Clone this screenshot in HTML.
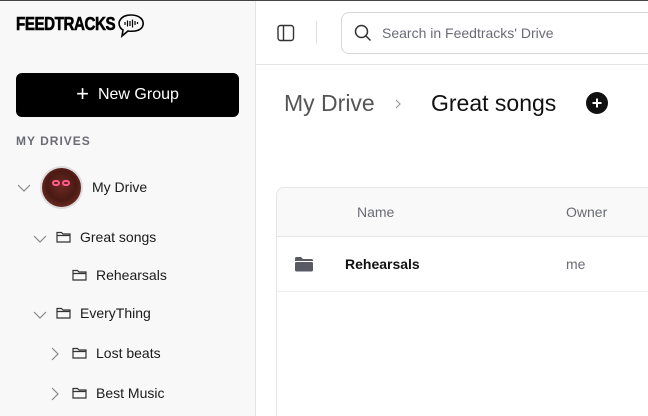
<!DOCTYPE html>
<html style="overflow:hidden"><head><meta charset="utf-8"><style>
*{margin:0;padding:0;box-sizing:border-box}
html,body{width:648px;height:416px;overflow:hidden}
body{background:#fff;font-family:"Liberation Sans",sans-serif;position:relative;color:#111}
.a{position:absolute}
#top{left:0;top:0;width:648px;height:1px;background:#444}
#side{left:0;top:1px;width:256px;height:415px;background:#f8f8f8;border-right:1px solid #e3e3e3}
.logo{left:16px;top:14px;font-weight:bold;font-size:18px;letter-spacing:-0.5px;transform:scaleX(0.84);transform-origin:left top;color:#000;-webkit-text-stroke:0.6px #000}
.btn{left:16px;top:73px;width:223px;height:44px;background:#000;border-radius:6px;color:#fff;font-size:16px;display:flex;align-items:center;justify-content:center}
.lab{left:16px;top:134px;font-size:12px;color:#6b6b76;letter-spacing:1px;font-weight:bold}
.t{font-size:14px;color:#1a1a1a}
.chev{stroke:#888;fill:none;stroke-width:1.2}
.fold{stroke:#333;fill:none;stroke-width:1.2}
</style></head><body>
<div id="top" class="a"></div>
<div id="side" class="a"></div>
<div class="a logo">FEEDTRACKS</div>
<svg class="a" style="left:116px;top:13px" width="29" height="25" viewBox="0 0 29 25"><path d="M4 14 C1 8 6 2 15 2 C24 2 28 7 27 12 C26 17 20 19 12 18 L6 23 L7 17 C5 16 4.5 15 4 14Z" fill="none" stroke="#000" stroke-width="1.6"/><g stroke="#000" stroke-width="1.2"><path d="M9 9v3M11.5 7.5v6M14 8v5M16.5 6.5v8M19 8v4M21.5 9v2"/></g></svg>
<div class="a btn"><span style="font-size:22px;font-weight:300;margin-right:9px;margin-top:-3px">+</span>New Group</div>
<div class="a lab">MY DRIVES</div>
<svg class="a" style="left:17px;top:183px" width="14" height="10"><path class="chev" d="M1 2l6 6 6-6"/></svg>
<div class="a" style="left:40px;top:166px;width:43px;height:43px;border-radius:50%;background:#ddd;padding:2px"><div style="width:39px;height:39px;border-radius:50%;background:radial-gradient(circle at 50% 45%,#6b2a22 0,#4a1a14 50%,#8a3a2a 100%);position:relative"><div style="position:absolute;left:10px;top:12px;width:8px;height:6px;border:2px solid #ff5a8a;border-radius:3px"></div><div style="position:absolute;left:20px;top:12px;width:8px;height:6px;border:2px solid #ff5a8a;border-radius:3px"></div></div></div>
<div class="a t" style="left:92px;top:179px">My Drive</div>
<svg class="a" style="left:33px;top:234px" width="14" height="10"><path class="chev" d="M1 2l6 6 6-6"/></svg>
<svg class="a" style="left:56px;top:230px" width="15" height="13"><path class="fold" d="M1 2.5h4.5l1.5 1.5h7v8H1zM1 5.5h13"/></svg>
<div class="a t" style="left:80px;top:229px">Great songs</div>
<svg class="a" style="left:72px;top:268px" width="15" height="13"><path class="fold" d="M1 2.5h4.5l1.5 1.5h7v8H1zM1 5.5h13"/></svg>
<div class="a t" style="left:96px;top:267px">Rehearsals</div>
<svg class="a" style="left:33px;top:310px" width="14" height="10"><path class="chev" d="M1 2l6 6 6-6"/></svg>
<svg class="a" style="left:56px;top:306px" width="15" height="13"><path class="fold" d="M1 2.5h4.5l1.5 1.5h7v8H1zM1 5.5h13"/></svg>
<div class="a t" style="left:80px;top:305px">EveryThing</div>
<svg class="a" style="left:50px;top:347px" width="10" height="14"><path class="chev" d="M2 1l6 6-6 6"/></svg>
<svg class="a" style="left:72px;top:346px" width="15" height="13"><path class="fold" d="M1 2.5h4.5l1.5 1.5h7v8H1zM1 5.5h13"/></svg>
<div class="a t" style="left:96px;top:345px">Lost beats</div>
<svg class="a" style="left:50px;top:387px" width="10" height="14"><path class="chev" d="M2 1l6 6-6 6"/></svg>
<svg class="a" style="left:72px;top:386px" width="15" height="13"><path class="fold" d="M1 2.5h4.5l1.5 1.5h7v8H1zM1 5.5h13"/></svg>
<div class="a t" style="left:96px;top:385px">Best Music</div>

<div class="a" style="left:256px;top:64px;width:392px;height:1px;background:#e5e5e5"></div>
<svg class="a" style="left:277px;top:24px" width="18" height="18"><rect x="1" y="1.5" width="15.5" height="15" rx="2.5" fill="none" stroke="#333" stroke-width="1.4"/><path d="M6.5 2v14" stroke="#333" stroke-width="1.4"/></svg>
<div class="a" style="left:316px;top:21px;width:1px;height:23px;background:#ddd"></div>
<div class="a" style="left:341px;top:12px;width:330px;height:42px;border:1px solid #d6d6d6;border-radius:8px"></div>
<svg class="a" style="left:354px;top:24px" width="18" height="18"><circle cx="7.5" cy="7.5" r="6" fill="none" stroke="#333" stroke-width="1.5"/><path d="M12 12l4.5 4.5" stroke="#333" stroke-width="1.5"/></svg>
<div class="a" style="left:382px;top:25px;font-size:14px;color:#6b6b76">Search in Feedtracks' Drive</div>
<div class="a" style="left:284px;top:90px;font-size:23px;color:#555">My Drive</div>
<svg class="a" style="left:395px;top:99px" width="8" height="10"><path d="M1 1l4 4-4 4" stroke="#999" fill="none" stroke-width="1.2"/></svg>
<div class="a" style="left:431px;top:90px;font-size:23px;color:#111">Great songs</div>
<svg class="a" style="left:586px;top:92px" width="22" height="22"><circle cx="11" cy="11" r="11" fill="#111"/><path d="M11 6.5v9M6.5 11h9" stroke="#fff" stroke-width="2"/></svg>

<div class="a" style="left:276px;top:187px;width:400px;height:229px;border:1px solid #e5e5e5;border-bottom:none;border-radius:8px 8px 0 0;overflow:hidden">
<div style="height:49px;background:#f9f9f9;border-bottom:1px solid #e5e5e5"></div>
<div style="height:55px;border-bottom:1px solid #ececec"></div>
</div>
<div class="a" style="left:357px;top:204px;font-size:14px;color:#6b6b76">Name</div>
<div class="a" style="left:566px;top:204px;font-size:14px;color:#6b6b76">Owner</div>
<svg class="a" style="left:294px;top:256px" width="19" height="16"><path d="M1 2.5a1.5 1.5 0 0 1 1.5-1.5h4.5l2 2h8.5a1.5 1.5 0 0 1 1.5 1.5V5H1z" fill="#5a5a64"/><rect x="1" y="6" width="18" height="9.5" rx="1.5" fill="#5a5a64"/></svg>
<div class="a" style="left:345px;top:256px;font-size:14px;color:#111;font-weight:bold;">Rehearsals</div>
<div class="a" style="left:566px;top:256px;font-size:14px;color:#6b6b76">me</div>
</body></html>
